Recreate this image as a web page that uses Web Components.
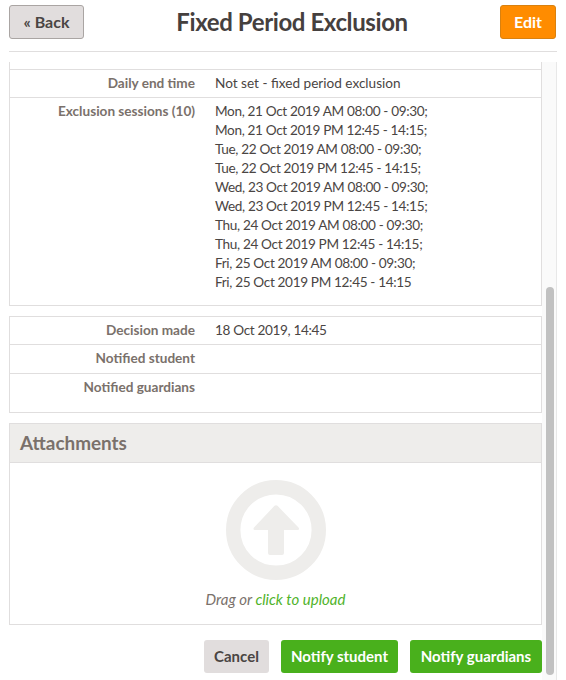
<!DOCTYPE html>
<html><head><meta charset="utf-8"><style>
html,body{margin:0;padding:0;background:#fff;height:100%;overflow:hidden}
body{font-family:Lato,"Liberation Sans",sans-serif;font-size:14px;color:#4a4543}
</style></head><body>
<app-page>
  <page-header slot="header" heading="Fixed Period Exclusion"></page-header>
  <detail-table>
    <detail-row label="Daily start time">Not set</detail-row>
    <detail-row label="Daily end time">Not set - fixed period exclusion</detail-row>
    <detail-row label="Exclusion sessions (10)" tail="9" tight>Mon, 21 Oct 2019 AM 08:00 - 09:30;<br>Mon, 21 Oct 2019 PM 12:45 - 14:15;<br>Tue, 22 Oct 2019 AM 08:00 - 09:30;<br>Tue, 22 Oct 2019 PM 12:45 - 14:15;<br>Wed, 23 Oct 2019 AM 08:00 - 09:30;<br>Wed, 23 Oct 2019 PM 12:45 - 14:15;<br>Thu, 24 Oct 2019 AM 08:00 - 09:30;<br>Thu, 24 Oct 2019 PM 12:45 - 14:15;<br>Fri, 25 Oct 2019 AM 08:00 - 09:30;<br>Fri, 25 Oct 2019 PM 12:45 - 14:15</detail-row>
  </detail-table>
  <detail-table>
    <detail-row label="Decision made" tight>18 Oct 2019, 14:45</detail-row>
    <detail-row label="Notified student" tail="1"></detail-row>
    <detail-row label="Notified guardians" tail="11"></detail-row>
  </detail-table>
  <attach-panel></attach-panel>
  <action-bar></action-bar>
</app-page>
<script>
function def(name, css, html){
  customElements.define(name, class extends HTMLElement{
    connectedCallback(){
      if(this.shadowRoot) return;
      const s=this.attachShadow({mode:'open'});
      s.innerHTML='<style>'+css+'</style>'+(typeof html==='function'?html(this):html);
    }
  });
}
def('ui-button',`
:host{display:inline-flex;align-items:center;justify-content:center;box-sizing:border-box;height:33px;padding:0 6px 2px;border-radius:3px;font:700 15px Lato,"Liberation Sans",sans-serif;white-space:nowrap}
:host([kind=green]){background:#49b01c;color:#fff}
:host([kind=grey]){background:#e1dddd;color:#4a4543}
:host([kind=back]){height:34px;background:#e1dddd;color:#4a4543;border:1px solid #aaa5a3;font-size:16px}
:host([kind=orange]){height:34px;background:#ff8c00;color:#fff;border:1px solid #d9810f;font-size:16px}
`,`<slot></slot>`);
def('page-header',`
:host{display:flex;align-items:center;justify-content:space-between;box-sizing:border-box;height:52px;padding:5px 0 12px;margin:0 9px;border-bottom:1px solid #e0dede}
h1{margin:0 0 2px;font:700 24px Lato,"Liberation Sans",sans-serif;letter-spacing:-.4px;color:#45403e;flex:1;text-align:center}
ui-button[kind=back]{width:75px}
ui-button[kind=orange]{width:56px;margin-right:1px}
`,h=>`<ui-button kind="back">« Back</ui-button><h1>${h.getAttribute('heading')}</h1><ui-button kind="orange">Edit</ui-button>`);
def('app-page',`
:host{display:flex;flex-direction:column;height:680px;width:566px;box-sizing:border-box}
.pane{display:flex;height:618px;margin-top:10px;padding-left:9px;overflow:hidden}
.content{width:533px;flex:none;overflow:hidden;height:618px}
.inner{margin-top:-21px;display:flex;flex-direction:column}
.track{box-sizing:border-box;width:15px;height:618px;background:#fafafa;border-right:1px solid #e8e8e8;padding:225px 2px 5px 4px;flex:none}
.thumb{height:100%;background:#c1c1c1;border-radius:4px}
`,`<slot name="header"></slot><div class="pane"><div class="content"><div class="inner"><slot></slot></div></div><div class="track"><div class="thumb"></div></div></div>`);
def('detail-table',`
:host{display:block;box-sizing:border-box;border:1px solid #e0dede;border-top-width:0;margin-bottom:10px}
`,`<slot></slot>`);
def('detail-row',`
:host{display:grid;grid-template-columns:185px 1fr;column-gap:20px;border-top:1px solid #e0dede;line-height:19px;padding:4px 0;font-size:13.6px}
:host([tight]) .v{letter-spacing:-.35px}
.l{text-align:right;font-weight:700;color:#7a716b}
.v{color:#4a4543;min-height:19px}
`,h=>`<div class="l">${h.getAttribute('label')}</div><div class="v" style="padding-bottom:${h.getAttribute('tail')||0}px"><slot></slot></div>`);
def('attach-panel',`
:host{display:block;box-sizing:border-box;height:202px;border:1px solid #e0dede;margin-bottom:15px}
h2{margin:0;box-sizing:border-box;height:39px;padding-left:10px;background:#eeedeb;border-bottom:1px solid #e0dede;font:700 18.9px/37px Lato,"Liberation Sans",sans-serif;color:#7a716b}
.drop{display:flex;flex-direction:column;align-items:center;padding-top:17px}
svg{display:block;width:100px;height:100px}
p{margin:10px 0 0;font:italic 15px/19px Lato,"Liberation Sans",sans-serif;color:#7a716b}
span{color:#4fb32a}
`,`<h2>Attachments</h2><div class="drop"><svg viewBox="0 0 100 100"><circle cx="50" cy="50" r="42.8" fill="none" stroke="#eeedeb" stroke-width="14.4"/><path d="M48.500 25.800 L28 47.500 Q26.500 50 29 50 H42 V73 Q42 75 44 75 H56 Q58 75 58 73 V50 H71.500 Q74 50 72.500 47.500 L51.500 25.800 Q50 24.500 48.500 25.800Z" fill="#eeedeb"/></svg><p>Drag or <span>click to upload</span></p></div>`);
def('action-bar',`
:host{display:flex;justify-content:flex-end;gap:12px}
ui-button[kind=grey]{width:65px}
ui-button.a{width:117px}
ui-button.b{width:132px}
`,`<ui-button kind="grey">Cancel</ui-button><ui-button kind="green" class="a">Notify student</ui-button><ui-button kind="green" class="b">Notify guardians</ui-button>`);
</script>
</body></html>
